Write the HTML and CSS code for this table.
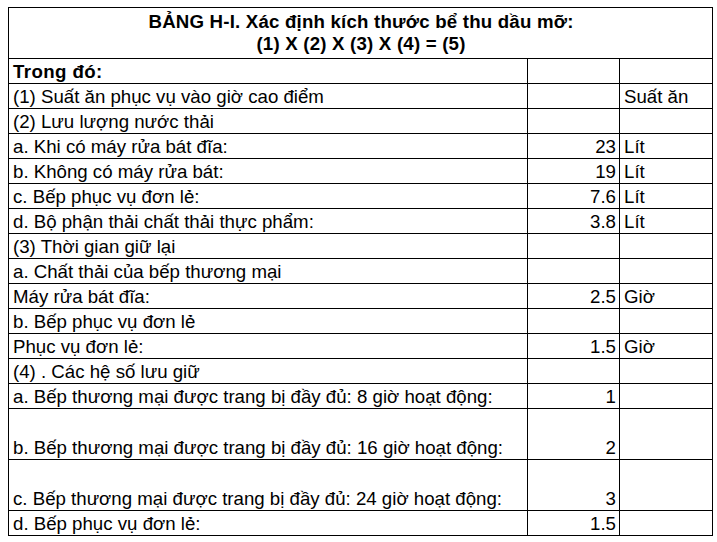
FILE: index.html
```html
<!DOCTYPE html>
<html lang="vi">
<head>
<meta charset="utf-8">
<link rel="stylesheet" href="styles.css">
</head>
<body>
<table class="sheet">
  <colgroup>
    <col class="c-label">
    <col class="c-value">
    <col class="c-unit">
  </colgroup>
  <tr class="title-row">
    <td class="title" colspan="3">BẢNG H-I. Xác định kích thước bể thu dầu mỡ:<br>(1) X (2) X (3) X (4) = (5)</td>
  </tr>
  <tr><td class="bold">Trong đó:</td><td></td><td></td></tr>
  <tr><td>(1) Suất ăn phục vụ vào giờ cao điểm</td><td></td><td>Suất ăn</td></tr>
  <tr><td>(2) Lưu lượng nước thải</td><td></td><td></td></tr>
  <tr><td>a. Khi có máy rửa bát đĩa:</td><td class="num">23</td><td>Lít</td></tr>
  <tr><td>b. Không có máy rửa bát:</td><td class="num">19</td><td>Lít</td></tr>
  <tr><td>c. Bếp phục vụ đơn lẻ:</td><td class="num">7.6</td><td>Lít</td></tr>
  <tr><td>d. Bộ phận thải chất thải thực phẩm:</td><td class="num">3.8</td><td>Lít</td></tr>
  <tr><td>(3) Thời gian giữ lại</td><td></td><td></td></tr>
  <tr><td>a. Chất thải của bếp thương mại</td><td></td><td></td></tr>
  <tr><td>Máy rửa bát đĩa:</td><td class="num">2.5</td><td>Giờ</td></tr>
  <tr><td>b. Bếp phục vụ đơn lẻ</td><td></td><td></td></tr>
  <tr><td>Phục vụ đơn lẻ:</td><td class="num">1.5</td><td>Giờ</td></tr>
  <tr><td>(4) . Các hệ số lưu giữ</td><td></td><td></td></tr>
  <tr><td>a. Bếp thương mại được trang bị đầy đủ: 8 giờ hoạt động:</td><td class="num">1</td><td></td></tr>
  <tr class="tall"><td>b. Bếp thương mại được trang bị đầy đủ: 16 giờ hoạt động:</td><td class="num">2</td><td></td></tr>
  <tr class="tall"><td>c. Bếp thương mại được trang bị đầy đủ: 24 giờ hoạt động:</td><td class="num">3</td><td></td></tr>
  <tr><td>d. Bếp phục vụ đơn lẻ:</td><td class="num">1.5</td><td></td></tr>
</table>
</body>
</html>
```
FILE: styles.css
```css
html, body {
  background: #ffffff;
}
body {
  margin: 7px 0 0 8px;
  font-family: "Liberation Sans", Arial, sans-serif;
  font-size: 18.67px;
  color: #000000;
}
.sheet {
  border-collapse: collapse;
  table-layout: fixed;
  width: 704px;
}
.c-label { width: 519px; }
.c-value { width: 92px; }
.c-unit { width: 93px; }
.sheet td {
  border: 1px solid #000000;
  height: 23px;
  padding: 0 3px 1px 4px;
  line-height: 21px;
  vertical-align: bottom;
  white-space: nowrap;
  overflow: hidden;
}
.sheet tr.tall td {
  height: 49px;
}
.sheet tr.title-row td {
  height: 49px;
}
.sheet td.title {
  text-align: center;
  font-weight: bold;
  line-height: 22px;
  letter-spacing: 0.2px;
  vertical-align: middle;
}
.sheet td.bold {
  font-weight: bold;
  letter-spacing: 0.4px;
}
.sheet td.num {
  text-align: right;
}
```
